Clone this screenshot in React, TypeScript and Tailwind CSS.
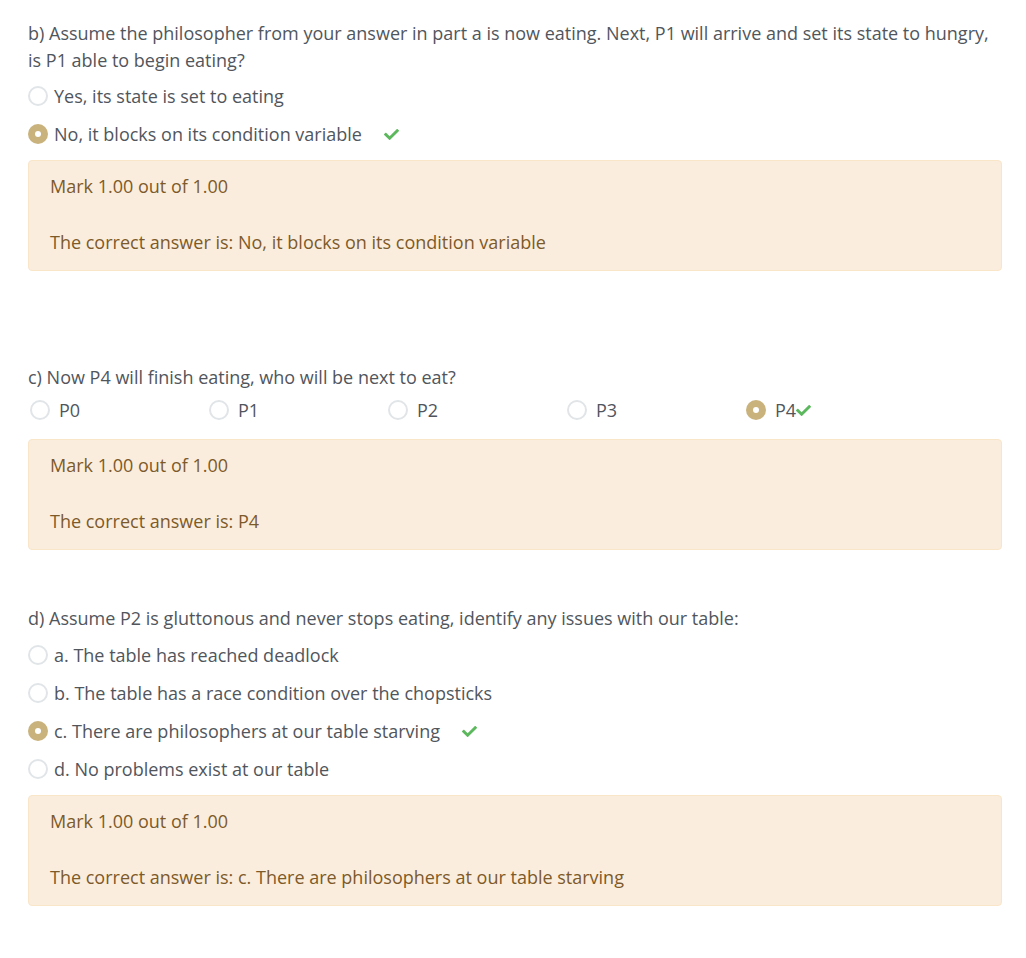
import React from "react";
import { FaCheck } from "react-icons/fa";

const Radio = ({ checked }: { checked?: boolean }) =>
  checked ? (
    <span className="flex h-[20px] w-[20px] shrink-0 items-center justify-center rounded-full bg-[#c9b27c]">
      <span className="h-[6px] w-[6px] rounded-full bg-white" />
    </span>
  ) : (
    <span className="h-[20px] w-[20px] shrink-0 rounded-full border-2 border-[#e1e5e8] bg-white" />
  );

const Check = () => <FaCheck className="shrink-0 text-[15px] text-[#5cb85c]" />;

const Option = ({ label, checked, correct }: { label: string; checked?: boolean; correct?: boolean }) => (
  <div className="flex h-[38px] items-center">
    <Radio checked={checked} />
    <span className="ml-[6px]">{label}</span>
    {correct && (
      <span className="ml-[22px] flex items-center">
        <Check />
      </span>
    )}
  </div>
);

const Outcome = ({ answer }: { answer: string }) => (
  <div className="rounded-[4px] border border-[#f9e6c9] bg-[#fbeddd] pb-[14px] pl-[21px] pt-[12px] text-[#7d5a29]">
    <div className="leading-[27px]">Mark 1.00 out of 1.00</div>
    <div className="mt-[29px] leading-[27px]">The correct answer is: {answer}</div>
  </div>
);

export default function App() {
  return (
    <div
      className="min-h-[958px] w-[1026px] bg-white px-[28px] pt-[20px] text-[18px] leading-[27px] text-[#51565c]"
      style={{ fontFamily: '"Open Sans", "Noto Sans", sans-serif' }}
    >
      <div className="w-[974px]">
        <p>
          b) Assume the philosopher from your answer in part a is now eating. Next, P1 will arrive and set its state to hungry,
          is P1 able to begin eating?
        </p>
        <div className="mt-[3px]">
          <Option label="Yes, its state is set to eating" />
          <Option label="No, it blocks on its condition variable" checked correct />
        </div>
        <div className="mt-[7px]">
          <Outcome answer="No, it blocks on its condition variable" />
        </div>

        <p className="mt-[93px]">c) Now P4 will finish eating, who will be next to eat?</p>
        <div className="flex h-[38px] items-center pl-[2px]">
          {["P0", "P1", "P2", "P3"].map((p) => (
            <div key={p} className="flex w-[179px] items-center">
              <Radio />
              <span className="ml-[9px]">{p}</span>
            </div>
          ))}
          <div className="flex items-center">
            <Radio checked />
            <span className="ml-[9px]">P4</span>
            <Check />
          </div>
        </div>
        <div className="mt-[10px]">
          <Outcome answer="P4" />
        </div>

        <p className="mt-[55px]">d) Assume P2 is gluttonous and never stops eating, identify any issues with our table:</p>
        <div className="mt-[4px]">
          <Option label="a. The table has reached deadlock" />
          <Option label="b. The table has a race condition over the chopsticks" />
          <Option label="c. There are philosophers at our table starving" checked correct />
          <Option label="d. No problems exist at our table" />
        </div>
        <div className="mt-[7px]">
          <Outcome answer="c. There are philosophers at our table starving" />
        </div>
      </div>
    </div>
  );
}
